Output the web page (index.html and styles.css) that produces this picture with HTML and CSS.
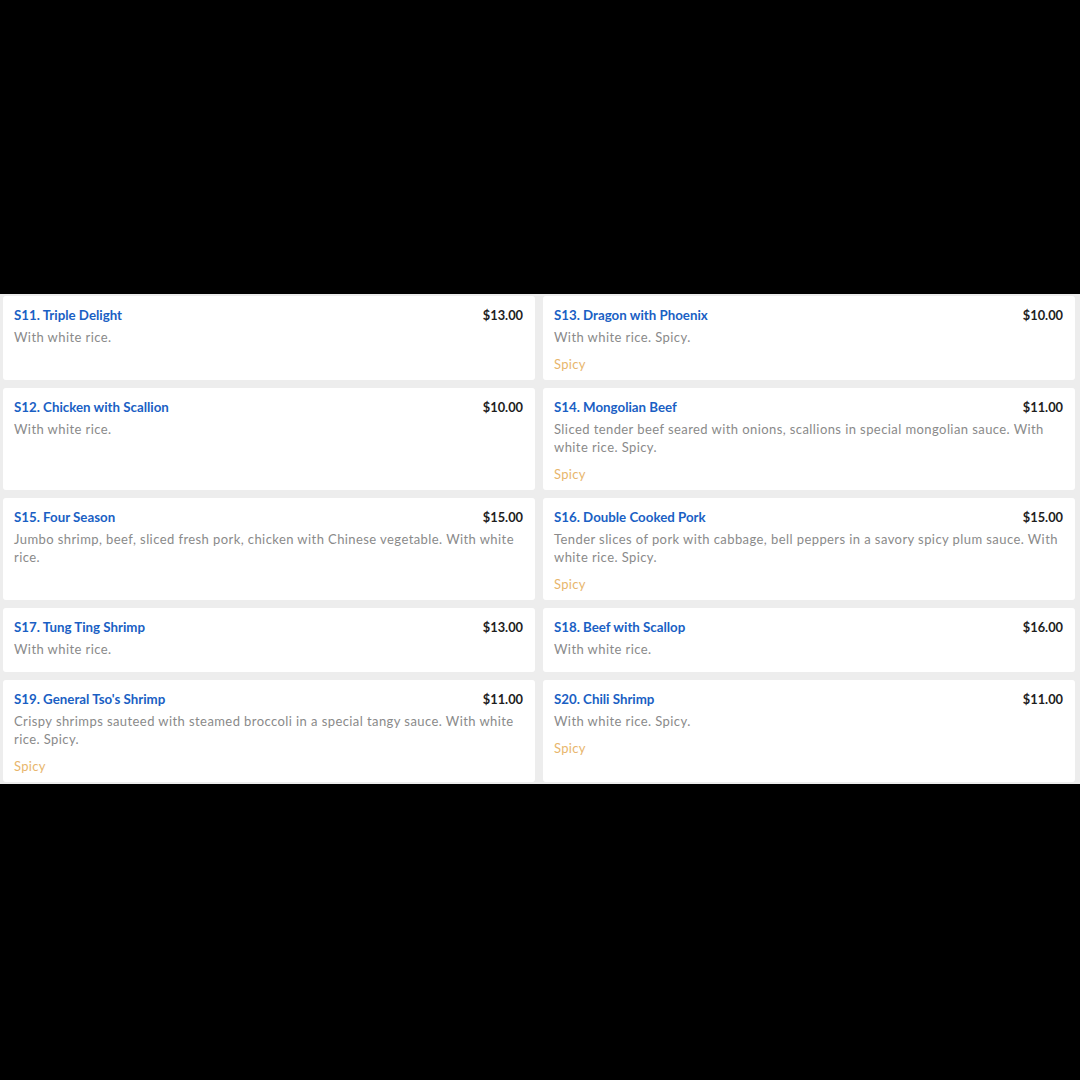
FILE: index.html
```html
<!DOCTYPE html>
<html lang="en">
<head>
<meta charset="utf-8">
<title>Menu</title>
<link rel="stylesheet" href="styles.css">
</head>
<body>
<div class="band">
  <div class="grid">
    <div class="card">
      <div class="head"><span class="name">S11. Triple Delight</span><span class="price">$13.00</span></div>
      <p class="desc">With white rice.</p>
    </div>
    <div class="card">
      <div class="head"><span class="name">S13. Dragon with Phoenix</span><span class="price">$10.00</span></div>
      <p class="desc">With white rice. Spicy.</p>
      <p class="tag">Spicy</p>
    </div>
    <div class="card">
      <div class="head"><span class="name">S12. Chicken with Scallion</span><span class="price">$10.00</span></div>
      <p class="desc">With white rice.</p>
    </div>
    <div class="card">
      <div class="head"><span class="name">S14. Mongolian Beef</span><span class="price">$11.00</span></div>
      <p class="desc">Sliced tender beef seared with onions, scallions in special mongolian sauce. With white rice. Spicy.</p>
      <p class="tag">Spicy</p>
    </div>
    <div class="card">
      <div class="head"><span class="name">S15. Four Season</span><span class="price">$15.00</span></div>
      <p class="desc">Jumbo shrimp, beef, sliced fresh pork, chicken with Chinese vegetable. With white rice.</p>
    </div>
    <div class="card">
      <div class="head"><span class="name">S16. Double Cooked Pork</span><span class="price">$15.00</span></div>
      <p class="desc">Tender slices of pork with cabbage, bell peppers in a savory spicy plum sauce. With white rice. Spicy.</p>
      <p class="tag">Spicy</p>
    </div>
    <div class="card">
      <div class="head"><span class="name">S17. Tung Ting Shrimp</span><span class="price">$13.00</span></div>
      <p class="desc">With white rice.</p>
    </div>
    <div class="card">
      <div class="head"><span class="name">S18. Beef with Scallop</span><span class="price">$16.00</span></div>
      <p class="desc">With white rice.</p>
    </div>
    <div class="card">
      <div class="head"><span class="name">S19. General Tso's Shrimp</span><span class="price">$11.00</span></div>
      <p class="desc">Crispy shrimps sauteed with steamed broccoli in a special tangy sauce. With white rice. Spicy.</p>
      <p class="tag">Spicy</p>
    </div>
    <div class="card">
      <div class="head"><span class="name">S20. Chili Shrimp</span><span class="price">$11.00</span></div>
      <p class="desc">With white rice. Spicy.</p>
      <p class="tag">Spicy</p>
    </div>
  </div>
</div>
</body>
</html>
```

FILE: styles.css
```css
html, body {
  margin: 0;
  padding: 0;
  background: #000;
}
body {
  width: 1080px;
  height: 1080px;
  padding-top: 294px;
  box-sizing: border-box;
  font-family: "Lato", "Liberation Sans", sans-serif;
}
.band {
  background: #ededed;
  padding: 2px 5px 2px 3px;
}
.grid {
  display: grid;
  grid-template-columns: 1fr 1fr;
  gap: 8px;
}
.card {
  background: #fff;
  border-radius: 3px;
  padding: 10px 12px 7px 11px;
}
.head {
  display: flex;
  justify-content: space-between;
  align-items: baseline;
  line-height: 18px;
}
.name {
  color: #1a5fc4;
  font-weight: 700;
  font-size: 13.3px;
}
.price {
  color: #1e1e1e;
  font-weight: 700;
  font-size: 12.8px;
}
.desc {
  margin: 4px 0 7px;
  color: #8a8a8a;
  font-size: 13px;
  line-height: 18px;
  letter-spacing: 0.42px;
}
.tag {
  margin: 9px 0 0;
  color: #e8b66c;
  font-size: 13px;
  line-height: 18px;
  letter-spacing: 0.3px;
}
```
